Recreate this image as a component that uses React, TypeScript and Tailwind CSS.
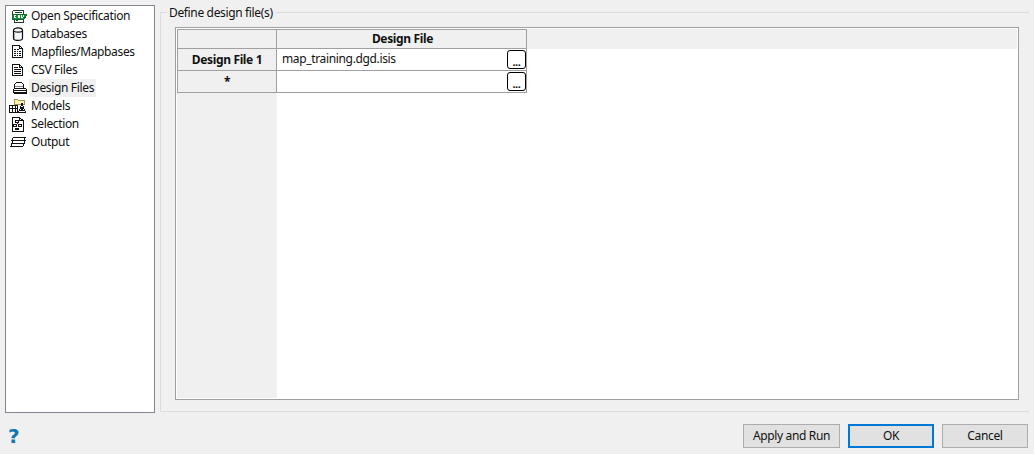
import React from "react";

const S = ({ children }: { children: React.ReactNode }) => (
  <svg width="18" height="18" viewBox="0 0 18 18" fill="none" stroke="#111" strokeWidth="1" shapeRendering="crispEdges" className="shrink-0">
    {children}
  </svg>
);

const OpenIcon = () => (
  <S>
    <path d="M3.5 3.5h11v3M3.5 3.5v3M5.5 5.5h7M5.5 12.5v3h9v-3" stroke="#1f3d2a" />
    <path d="M3 7h14v2l-2 3H9l-1 2-1-2H3z" fill="#17903c" stroke="#0e6a2a" />
    <path d="M5 8.5h2M5 8.5v2h2M9 8.5l1 2.5 1-2.5M12 8.5l1 2.5 2-2.5" stroke="#fff" />
  </S>
);
const DbIcon = () => (
  <S>
    <path d="M4.5 5.5c0-3.5 9-3.5 9 0v8c0 2.5-9 2.5-9 0z" fill="#f6f6f6" strokeWidth="1.2" shapeRendering="geometricPrecision" />
    <path d="M4.5 5.5c0 2.2 9 2.2 9 0" strokeWidth="1.2" shapeRendering="geometricPrecision" />
    <path d="M5.5 8v6" stroke="#a8a8a8" />
  </S>
);
const MapIcon = () => (
  <S>
    <path d="M3.5 2.5h7l3 3v9h-10z" fill="#fff" />
    <path d="M10.5 2.5v3h3" />
    <path d="M5 6.5h2M8 6.5h2M5 8.5h2M8 8.5h1M10 8.5h2M5 10.5h2M8 10.5h1M10 10.5h2M5 12.5h2M8 12.5h1M10 12.5h2" />
  </S>
);
const CsvIcon = () => (
  <S>
    <path d="M3.5 3.5h7l3 3v8h-10z" fill="#fff" />
    <path d="M10.5 3.5v3h3" />
    <path d="M5 6.5h4M5 8.5h7M5 10.5h7M5 12.5h7" />
  </S>
);
const DesignIcon = () => (
  <S>
    <path d="M5.5 8.5v-3l2-2h5l2 2v3" fill="#fff" />
    <path d="M6 7h8" stroke="#888" />
    <path d="M5.5 9.5h11l1 1v4h-11l-2-1v-3z" fill="#fff" />
    <path d="M5 11.5h12M5 13.5h12" />
  </S>
);
const ModelIcon = () => (
  <S>
    <path d="M5.5 2.5h3l1 1h6v4h-10z" fill="#fff3b0" stroke="#a3924a" />
    <path d="M0.5 8.5h8v7h-8z" fill="#fff" />
    <path d="M0.5 11.5h8M3.5 8.5v7M6 8.5v7" />
    <path d="M9.5 15.5l3.5-9 3.5 9" fill="#fff" />
    <path d="M12 13l1-3 1 3z" fill="#333" />
    <path d="M9 15.5h8" />
  </S>
);
const SelectionIcon = () => (
  <S>
    <path d="M3.5 2.5h7l3.5 3v10.5h-10.5z" fill="#fff" />
    <path d="M10.5 2.5v3h3" />
    <path d="M6.5 5.5h3v2h-3zM4.5 9.5h3v2h-3zM9.5 9.5h3v2h-3zM6.5 13.5h3v1h-3z" fill="#fff" />
    <path d="M8 8v1" />
  </S>
);
const OutputIcon = () => (
  <S>
    <path d="M4.5 4.5h12l-2 3h-12z" fill="#fff" />
    <path d="M4.5 7.5h12l-2 3h-12z" fill="#fff" />
    <path d="M3.5 10.5h12l-2 3h-12z" fill="#fff" />
  </S>
);

const items: [string, React.ReactNode, boolean][] = [
  ["Open Specification", <OpenIcon />, false],
  ["Databases", <DbIcon />, false],
  ["Mapfiles/Mapbases", <MapIcon />, false],
  ["CSV Files", <CsvIcon />, false],
  ["Design Files", <DesignIcon />, true],
  ["Models", <ModelIcon />, false],
  ["Selection", <SelectionIcon />, false],
  ["Output", <OutputIcon />, false],
];

const Browse = () => (
  <button className="w-[19px] h-[19px] ml-auto mt-px bg-white border border-black rounded-[3px] text-[11px] font-bold leading-[17px] text-[#111] pt-[2px]">
    ...
  </button>
);

const Btn = ({ label, primary, wide }: { label: string; primary?: boolean; wide?: boolean }) => (
  <button
    className={
      "h-[24px] bg-[#e1e1e1] text-[12px] text-[#111] " +
      (wide ? "w-[97px] " : "w-[86px] ") +
      (primary ? "border-2 border-[#0078d7]" : "border border-[#adadad]")
    }
  >
    {label}
  </button>
);

export default function App() {
  return (
    <div className="w-[1034px] h-[454px] bg-[#f0f0f0] overflow-hidden flex flex-col text-[12px] tracking-[-0.35px] text-[#111] [font-family:'Noto_Sans','Open_Sans',sans-serif]">
      <div className="flex h-[412px] pl-[5px] pt-[5px]">
        <div className="w-[150px] h-[408px] bg-white border border-[#828790] pt-[1px] pl-[3px]">
          {items.map(([label, icon, sel]) => (
            <div key={label} className="h-[18px] flex items-center">
              {icon}
              <span className={"ml-[2px] h-[18px] leading-[18px] px-[2px] " + (sel ? "bg-[#f0f0f0]" : "")}>{label}</span>
            </div>
          ))}
        </div>
        <div className="relative w-[869px] h-[400px] ml-[5px] mt-[7px] border-t border-l border-b border-[#dcdcdc] pl-[14px] pt-[14px]">
          <span className="absolute left-[6px] top-[-8px] h-[16px] leading-[15px] px-[2px] bg-[#f0f0f0]">Define design file(s)</span>
          <div className="w-[844px] h-[373px] border border-[#a0a0a0] bg-white p-px">
            <div className="relative h-full">
              <div className="w-[100px] h-full absolute left-0 top-0 bg-[#f0f0f0]" />
              <div className="h-[20px] bg-[#f0f0f0]" />
              <div className="absolute left-0 top-0 w-[350px] border border-[#a0a0a0] font-bold">
                <div className="flex h-[19px] border-b border-[#a0a0a0]">
                  <div className="w-[99px] border-r border-[#a0a0a0]" />
                  <div className="flex-1 text-center leading-[18px] pl-[2px]">Design File</div>
                </div>
                <div className="flex h-[22px] border-b border-[#a0a0a0]">
                  <div className="w-[99px] border-r border-[#a0a0a0] text-center leading-[21px] bg-[#f0f0f0]">Design File 1</div>
                  <div className="flex-1 flex bg-white font-normal leading-[20px] pl-[5px]">
                    <span>map_training.dgd.isis</span>
                    <Browse />
                  </div>
                </div>
                <div className="flex h-[21px]">
                  <div className="w-[99px] border-r border-[#a0a0a0] text-center leading-[21px] bg-[#f0f0f0]">*</div>
                  <div className="flex-1 flex bg-white font-normal">
                    <Browse />
                  </div>
                </div>
              </div>
            </div>
          </div>
        </div>
      </div>
      <div className="flex items-center h-[42px] pl-[8px] pr-[6px] pt-[6px]">
        <span className="text-[#0f77b0] font-bold text-[20px] leading-none [font-family:'DejaVu_Sans',sans-serif]">?</span>
        <div className="ml-auto flex gap-[8px]">
          <Btn label="Apply and Run" wide />
          <Btn label="OK" primary />
          <Btn label="Cancel" />
        </div>
      </div>
    </div>
  );
}
